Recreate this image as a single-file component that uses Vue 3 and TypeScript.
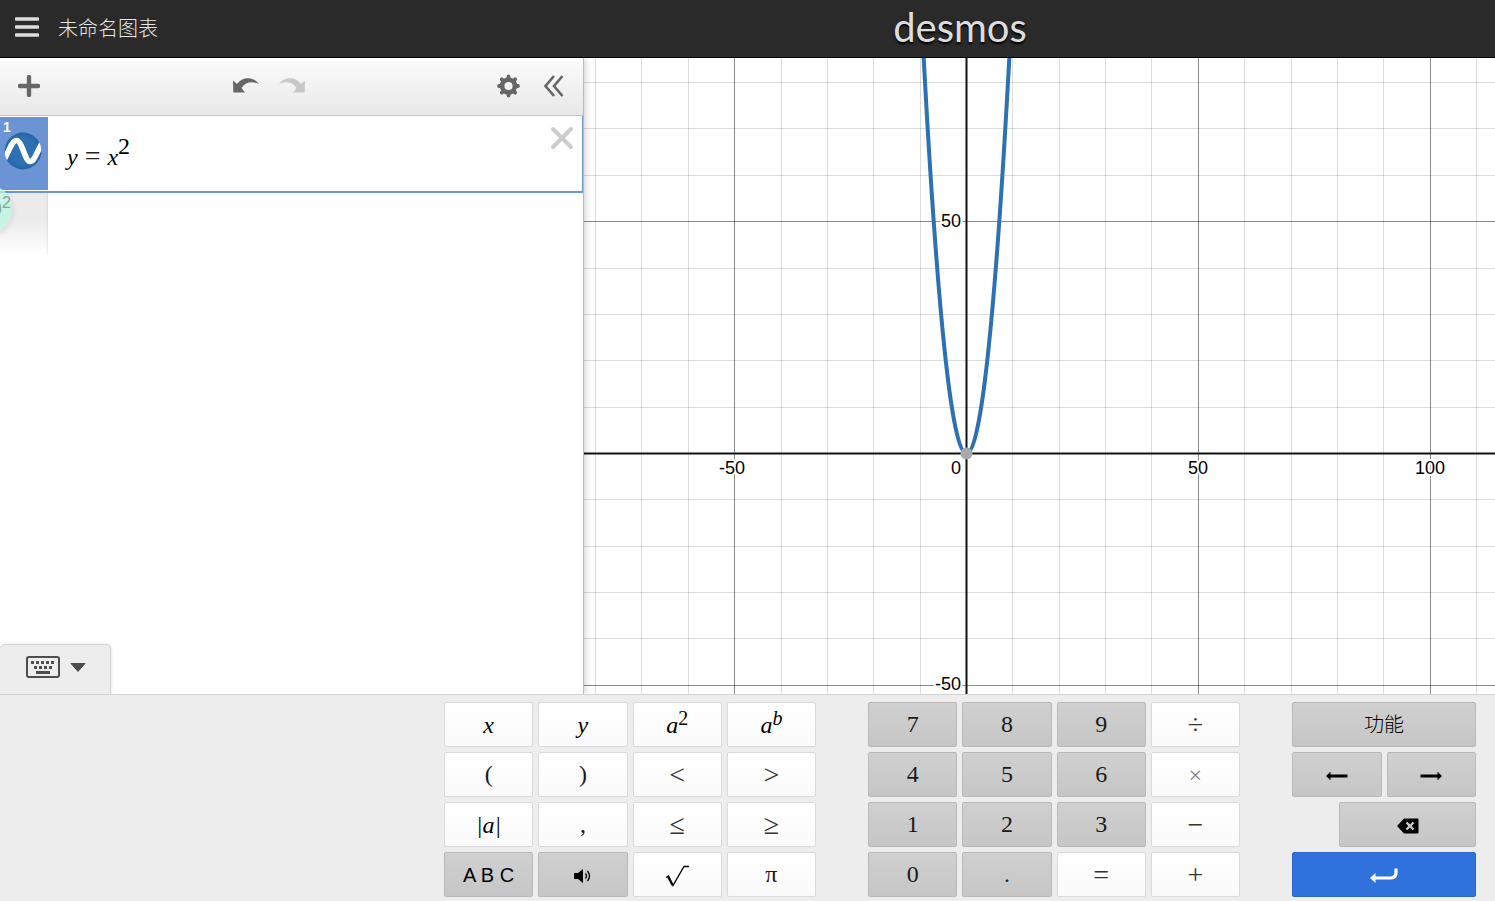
<script setup lang="ts">
import { ref } from 'vue'

interface Key {
  label: string
  base?: string
  sup?: string
  icon?: 'sound' | 'root' | 'left' | 'right' | 'delete' | 'enter'
  kind?: 'math' | 'num' | 'op' | 'text'
  dark?: boolean
  faint?: boolean
  wide?: 'full' | 'half' | 'end'
  primary?: boolean
}

const letters: Key[] = [
  { label: 'x', base: 'x', kind: 'math' },
  { label: 'y', base: 'y', kind: 'math' },
  { label: 'a squared', base: 'a', sup: '2', kind: 'math' },
  { label: 'a to the b', base: 'a', sup: 'b', kind: 'math' },
  { label: 'left parenthesis', base: '(', kind: 'num' },
  { label: 'right parenthesis', base: ')', kind: 'num' },
  { label: 'less than', base: '<', kind: 'op' },
  { label: 'greater than', base: '>', kind: 'op' },
  { label: 'absolute value', base: '|a|', kind: 'math' },
  { label: 'comma', base: ',', kind: 'num' },
  { label: 'less than or equal', base: '≤', kind: 'op' },
  { label: 'greater than or equal', base: '≥', kind: 'op' },
  { label: 'A B C', base: 'A B C', kind: 'text', dark: true },
  { label: 'sound', icon: 'sound', dark: true },
  { label: 'square root', icon: 'root' },
  { label: 'pi', base: 'π', kind: 'num' },
]

const digit = (d: string): Key => ({ label: d, base: d, kind: 'num', dark: true })
const operator = (label: string, base: string): Key => ({ label, base, kind: 'op' })

const numbers: Key[] = [
  ...['7', '8', '9'].map(digit), operator('divide', '÷'),
  ...['4', '5', '6'].map(digit), { ...operator('times', '×'), faint: true },
  ...['1', '2', '3'].map(digit), operator('minus', '−'),
  ...['0', '.'].map(digit), operator('equals', '='), operator('plus', '+'),
]

const actions: Key[] = [
  { label: '功能', base: '功能', kind: 'text', dark: true, wide: 'full' },
  { label: 'left', icon: 'left', dark: true, wide: 'half' },
  { label: 'right', icon: 'right', dark: true, wide: 'half' },
  { label: 'backspace', icon: 'delete', dark: true, wide: 'end' },
  { label: 'enter', icon: 'enter', primary: true, wide: 'full' },
]

const groups = [
  { name: 'letters', keys: letters },
  { name: 'numbers', keys: numbers },
  { name: 'actions', keys: actions },
]

const unit = 46.36
const origin = { x: 382.5, y: 395.5 }
const range = (from: number, to: number) => Array.from({ length: to - from + 1 }, (_, i) => from + i)
const columns = range(-9, 24).map(n => ({ n, at: Math.round(origin.x + n * unit - 0.5) + 0.5 }))
const rows = range(-12, 14).map(n => ({ n, at: Math.round(origin.y + n * unit - 0.5) + 0.5 }))

const reach = 9.6
const dx = (reach * unit) / 10
const dy = (reach * reach * unit) / 10
const curve = `M${origin.x - dx} ${origin.y - dy}Q${origin.x} ${origin.y + dy} ${origin.x + dx} ${origin.y - dy}`

const keypadOpen = ref(true)
</script>

<template>
  <div class="app">
    <header class="header">
      <button class="menu" aria-label="Menu">
        <svg width="24" height="20" viewBox="0 0 24 20"><path d="M1.5 2h21M1.5 10h21M1.5 18h21" stroke="#dedede" stroke-width="3.6" stroke-linecap="round" /></svg>
      </button>
      <h1 class="title">未命名图表</h1>
      <a class="logo" href="#">desmos</a>
    </header>

    <main class="main">
      <section class="panel">
        <div class="toolbar">
          <div class="tools">
            <button aria-label="Add">
              <svg width="22" height="22" viewBox="0 0 22 22"><path d="M11 2v18M2 11h18" stroke="#666" stroke-width="4.4" stroke-linecap="round" /></svg>
            </button>
          </div>
          <div class="tools">
            <button aria-label="Undo">
              <svg width="26" height="18" viewBox="0 0 26 18"><path d="M0 3.5 4 7C9 0 20-1 26 7 19 4 12 5 8.5 11L12 15.5H.3z" fill="#666" /></svg>
            </button>
            <button aria-label="Redo">
              <svg width="26" height="18" viewBox="0 0 26 18"><path d="M26 3.5 22 7C17 0 6-1 0 7 7 4 14 5 17.5 11L14 15.5H25.7z" fill="#c8c8c8" /></svg>
            </button>
          </div>
          <div class="tools">
            <button aria-label="Settings">
              <svg width="24" height="24" viewBox="-12.5 -12 24 24" stroke="#666" fill="none">
                <circle r="6.4" stroke-width="4.6" />
                <path v-for="i in 8" :key="i" d="M0-7.5V-9.5" stroke-width="3.8" stroke-linecap="round" stroke-linejoin="round" :transform="`rotate(${i * 45})`" />
              </svg>
            </button>
            <button aria-label="Collapse">
              <svg width="22" height="24" viewBox="0 0 22 24"><path d="M11 2 2.5 12 11 22M19.500 2 11 12 19.500 22" fill="none" stroke="#666" stroke-width="2.6" /></svg>
            </button>
          </div>
        </div>

        <div class="expression">
          <div class="tab">
            <span class="index">1</span>
            <button class="swatch" aria-label="Hide graph">
              <svg width="38" height="38" viewBox="0 0 38 38">
                <defs>
                  <radialGradient id="disc"><stop offset=".7" stop-color="#2d70b3" /><stop offset="1" stop-color="#2863a2" /></radialGradient>
                  <clipPath id="round"><circle cx="19" cy="19" r="18.5" /></clipPath>
                </defs>
                <circle cx="19" cy="19" r="18.5" fill="url(#disc)" />
                <path d="M0 28C5 19 8 8.500 12.500 8.500 18 8.500 21 29.500 26 29.500 30.500 29.500 33 20 38 11" fill="none" stroke="#fff" stroke-width="5.6" clip-path="url(#round)" />
              </svg>
            </button>
          </div>
          <div class="formula" role="textbox" aria-label="Expression 1" tabindex="0"><i>y</i><span class="equals">=</span><i>x</i><sup>2</sup></div>
          <button class="remove" aria-label="Delete expression">
            <svg width="24" height="24" viewBox="0 0 24 24"><path d="M3 3l18 18M21 3 3 21" stroke="#ccc" stroke-width="4" stroke-linecap="round" /></svg>
          </button>
        </div>
        <div class="next-tab"></div>
        <div class="bubble"><span>)</span><sup>2</sup></div>

        <button class="keypad-toggle" aria-label="Toggle keypad" @click="keypadOpen = !keypadOpen">
          <svg width="34" height="22" viewBox="0 0 34 22">
            <rect x="1" y="1" width="32" height="20" rx="2" fill="none" stroke="#4d4d4d" stroke-width="2" />
            <path d="M5 6.5h25" stroke="#4d4d4d" stroke-width="3" stroke-dasharray="3 2" />
            <path d="M8 11.5h20" stroke="#4d4d4d" stroke-width="3" stroke-dasharray="3 2" />
            <path d="M10 16.5h14" stroke="#4d4d4d" stroke-width="3" />
          </svg>
          <svg width="16" height="10" viewBox="0 0 16 10"><path d="M1 1.500h14L8 9.500z" fill="#4d4d4d" stroke="#4d4d4d" stroke-linejoin="round" /></svg>
        </button>
      </section>

      <svg class="graph" viewBox="0 0 911 636" preserveAspectRatio="xMinYMin slice" role="img" aria-label="y = x²">
        <rect width="911" height="636" fill="#fff" />
        <g fill="none">
          <path v-for="c in columns" :key="`c${c.n}`" :class="{ major: c.n % 5 === 0 }" class="line" :d="`M${c.at} 0V1400`" />
          <path v-for="r in rows" :key="`r${r.n}`" :class="{ major: r.n % 5 === 0 }" class="line" :d="`M0 ${r.at}H2000`" />
          <path :d="`M${origin.x} 0V1400M0 ${origin.y}H2000`" stroke="#111" stroke-width="2" />
          <path :d="curve" stroke="#2d70b3" stroke-width="4" />
        </g>
        <circle :cx="origin.x" :cy="origin.y" r="6" fill="#a9a9a9" />
        <g class="labels">
          <text x="148" y="416" text-anchor="middle">-50</text>
          <text x="614" y="416" text-anchor="middle">50</text>
          <text x="846" y="416" text-anchor="middle">100</text>
          <text x="377" y="416" text-anchor="end">0</text>
          <text x="377" y="169" text-anchor="end">50</text>
          <text x="377" y="632" text-anchor="end">-50</text>
        </g>
      </svg>
    </main>

    <section v-if="keypadOpen" class="keypad">
      <div v-for="g in groups" :key="g.name" class="keys" :class="g.name">
        <button
          v-for="k in g.keys" :key="k.label" class="key" :aria-label="k.label"
          :class="[k.kind, k.wide, { dark: k.dark, faint: k.faint, primary: k.primary }]"
        >
          <span v-if="k.base">{{ k.base }}<sup v-if="k.sup" :class="{ upright: k.sup === '2' }">{{ k.sup }}</sup></span>
          <svg v-else-if="k.icon === 'sound'" width="18" height="14" viewBox="0 0 18 14">
            <path d="M0 4h4l5-4v14l-5-4H0z" />
            <path d="M11.5 4.500q2 2.500 0 5M13.500 2q4 5 0 10" fill="none" stroke="#000" stroke-width="1.3" />
          </svg>
          <svg v-else-if="k.icon === 'root'" width="24" height="22" viewBox="0 0 24 22"><path d="M1 12.5 3.500 11 8 20.500 19 1.500h5" fill="none" stroke="#000" stroke-width="1.3" /><path d="M3 11.500 7.500 20" stroke="#000" stroke-width="2.2" /></svg>
          <svg v-else-if="k.icon === 'left' || k.icon === 'right'" width="22" height="10" viewBox="0 0 22 10" :class="k.icon">
            <path d="M0 5 4.500 .8V3.600H21.500V6.400H4.500V9.200z" />
          </svg>
          <svg v-else-if="k.icon === 'delete'" width="22" height="16" viewBox="0 0 22 16">
            <path d="M7 .5h13.500q1 0 1 1v13q0 1-1 1H7L0 8z" /><path d="M9.500 4.500l7 7m0-7-7 7" stroke="#cbcbcb" stroke-width="2.4" />
          </svg>
          <svg v-else width="28" height="16" viewBox="0 0 28 16">
            <path d="M26 .5v4.500q0 5-6 5H4" fill="none" stroke="#fff" stroke-width="3.200" /><path d="M0 10l5.500-5v10z" fill="#fff" />
          </svg>
        </button>
      </div>
    </section>
  </div>
</template>

<style>
body {
  margin: 0;
}
</style>

<style scoped>
.app {
  display: flex;
  flex-direction: column;
  height: 100vh;
  overflow: hidden;
  background: #fff;
  font-family: "Liberation Sans", "Noto Sans CJK SC", sans-serif;
}
button {
  display: flex;
  align-items: center;
  justify-content: center;
  margin: 0;
  padding: 0;
  border: 0;
  background: none;
  font: inherit;
  color: inherit;
}
.header {
  display: flex;
  align-items: center;
  box-sizing: border-box;
  height: 58px;
  flex: none;
  background: #2a2a2a;
  border-bottom: 1px solid #000;
  color: #e6e6e6;
}
.menu {
  width: 54px;
  height: 54px;
  padding-bottom: 4px;
}
.title {
  margin: 0 0 0 4px;
  padding-bottom: 2px;
  flex: 0 0 525px;
  font: 300 20px/30px "Noto Sans CJK SC", sans-serif;
}
.logo {
  flex: 1;
  padding-bottom: 4px;
  text-align: center;
  color: #ddd;
  font: 400 40px/48px Lato, sans-serif;
  text-decoration: none;
  text-shadow: 0 2px 2px #000;
  margin-right: 158px;
}
.main {
  display: flex;
  flex: 1;
  min-height: 0;
}
.panel {
  position: relative;
  z-index: 1;
  display: flex;
  flex-direction: column;
  flex: 0 0 583px;
  background: #fff;
  border-right: 1px solid #bbb;
  box-shadow: 0 0 8px rgba(0, 0, 0, 0.25);
  clip-path: inset(0 -12px 0 0);
}
.toolbar {
  display: flex;
  align-items: center;
  justify-content: space-between;
  box-sizing: border-box;
  height: 58px;
  padding: 0 6px 2px;
  background: linear-gradient(#fcfcfc, #e8e8e8);
  border-bottom: 1px solid #c2c2c2;
}
.tools {
  display: flex;
}
.tools button {
  width: 46px;
  height: 46px;
}
.expression {
  display: flex;
  align-items: flex-start;
  box-sizing: border-box;
  height: 77px;
  border-right: 1px solid #6a94d4;
  border-bottom: 2px solid #6a94d4;
}
.tab {
  width: 48px;
  height: 73px;
  margin-top: 1px;
  background: #6a94d4;
}
.index {
  display: block;
  height: 14px;
  padding: 2px 3px 0;
  color: #fff;
  font-size: 14px;
  font-weight: 700;
  line-height: 16px;
}
.swatch {
  margin: -1px 0 0 4px;
}
.formula {
  flex: 1;
  padding: 17px 0 0 19px;
  font: 24px/48px "Liberation Serif", serif;
  outline: 0;
}
.formula sup {
  font-size: 24px;
  line-height: 0;
  vertical-align: 11px;
}
.equals {
  margin: 0 7px;
  font-size: 28px;
  line-height: 0;
  color: #222;
}
.remove {
  width: 40px;
  height: 44px;
}
.next-tab {
  width: 48px;
  height: 62px;
  background: linear-gradient(#ebebeb 40%, #fff);
  box-shadow: inset -2px 0 2px -1px rgba(0, 0, 0, 0.08);
}
.bubble {
  position: absolute;
  top: 126px;
  left: -38px;
  box-sizing: border-box;
  width: 50px;
  height: 50px;
  padding-right: 1px;
  border-radius: 50%;
  background: rgba(190, 246, 224, 0.75);
  box-shadow: 0 2px 6px rgba(0, 0, 0, 0.12);
  color: #7fa796;
  text-align: right;
  font-size: 16px;
  line-height: 48px;
  clip-path: inset(0 -8px -8px 38px);
}
.bubble sup {
  font-size: 16px;
  line-height: 0;
  vertical-align: 5px;
}
.keypad-toggle {
  gap: 10px;
  align-self: flex-start;
  box-sizing: border-box;
  width: 111px;
  height: 51px;
  margin: auto 0 -1px;
  padding: 0 0 6px 1px;
  background: #ededed;
  border: 1px solid #d4d4d4;
  border-width: 1px 1px 0 0;
  border-radius: 5px 5px 0 0;
  box-shadow: 0 0 4px rgba(0, 0, 0, 0.1);
}
.graph {
  flex: 1;
  min-width: 0;
  height: 100%;
}
.line {
  stroke: #000;
  stroke-opacity: 0.14;
}
.line.major {
  stroke-opacity: 0.45;
}
.labels {
  fill: #000;
  stroke: #fff;
  stroke-width: 4px;
  stroke-linejoin: round;
  paint-order: stroke;
  font-size: 18px;
}
.keypad {
  display: flex;
  justify-content: flex-end;
  gap: 52px;
  box-sizing: border-box;
  flex: none;
  padding: 7px 19px 4px;
  background: #ededed;
  border-top: 1px solid #d4d4d4;
}
.keys {
  display: grid;
  grid-template-columns: repeat(4, 1fr);
  grid-auto-rows: 45px;
  gap: 5px;
  width: 372px;
}
.keys.actions {
  width: 184px;
}
.key {
  border: 1px solid #dadada;
  border-radius: 2px;
  background: linear-gradient(#fff, #fafafa);
  color: #000;
  font-size: 24px;
  line-height: 32px;
}
.key.dark {
  background: linear-gradient(#d0d0d0, #c6c6c6);
  border-color: #b9b9b9;
}
.key.primary {
  background: #2f72dc;
  border-color: #2a68cb;
}
.key.math,
.key.num,
.key.op {
  font-family: "Liberation Serif", serif;
}
.key.math {
  font-style: italic;
}
.key.num {
  padding-bottom: 2px;
  color: #1a1a1a;
}
.key.op {
  color: #333;
  font-size: 28px;
}
.key.faint {
  color: #777;
  font-size: 24px;
}
.key.text {
  font-size: 20px;
  font-weight: 300;
}
.key svg {
  margin-top: 2px;
}
.key sup {
  font-size: 20px;
  line-height: 0;
  vertical-align: 8px;
}
.upright {
  font-style: normal;
}
.full {
  grid-column: span 4;
}
.half {
  grid-column: span 2;
}
.end {
  grid-column: 2 / span 3;
}
svg.right {
  transform: rotate(180deg);
}
</style>
